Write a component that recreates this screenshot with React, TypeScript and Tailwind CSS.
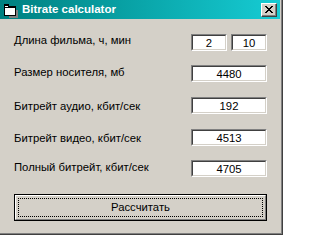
import * as React from "react";

type Row = {
  label: string;
  values: string[];
  rowClass: string;
  labelClass: string;
};

const ROWS: Row[] = [
  { label: "Длина фильма, ч, мин", values: ["2", "10"], rowClass: "mt-[15px]", labelClass: "mt-0" },
  { label: "Размер носителя, мб", values: ["4480"], rowClass: "mt-[14px]", labelClass: "mt-px" },
  { label: "Битрейт аудио, кбит/сек", values: ["192"], rowClass: "mt-[15px]", labelClass: "mt-[3px]" },
  { label: "Битрейт видео, кбит/сек", values: ["4513"], rowClass: "mt-[15px]", labelClass: "mt-[3px]" },
  { label: "Полный битрейт, кбит/сек", values: ["4705"], rowClass: "mt-[14px]", labelClass: "mt-px" },
];

function FormIcon() {
  return (
    <svg width="16" height="16" viewBox="0 0 16 16" shapeRendering="crispEdges" className="shrink-0">
      {/* shadow */}
      <rect x="7" y="8" width="9" height="8" fill="#808080" />
      {/* tab */}
      <rect x="2" y="2" width="5" height="2" fill="#000" />
      {/* window body */}
      <rect x="2" y="4" width="12" height="10" fill="#000" />
      <rect x="3" y="6" width="10" height="7" fill="#fff" />
      <rect x="3" y="4" width="3" height="1" fill="#fff" />
    </svg>
  );
}

function CloseGlyph() {
  const px: [number, number, number][] = [
    [0, 0, 2], [6, 0, 2],
    [1, 1, 2], [5, 1, 2],
    [2, 2, 4],
    [3, 3, 2],
    [2, 4, 4],
    [1, 5, 2], [5, 5, 2],
    [0, 6, 2], [6, 6, 2],
  ];
  return (
    <svg width="8" height="7" viewBox="0 0 8 7" shapeRendering="crispEdges">
      {px.map(([x, y, w], i) => (
        <rect key={i} x={x} y={y} width={w} height="1" fill="#000" />
      ))}
    </svg>
  );
}

function TitleBar() {
  return (
    <div className="flex h-[19px] shrink-0 items-center bg-gradient-to-r from-[#008080] to-[#16ccd4] pl-[2px] pr-[3px]">
      <FormIcon />
      <span className="ml-[4px] text-[11.5px] font-bold leading-none text-white">Bitrate calculator</span>
      <div className="ml-auto h-[14px] w-[16px] border-t border-l border-t-white border-l-white border-b border-r border-b-[#404040] border-r-[#404040] bg-[#d4d0c8]">
        <div className="flex h-full w-full items-center justify-center border-b border-r border-b-[#808080] border-r-[#808080]">
          <CloseGlyph />
        </div>
      </div>
    </div>
  );
}

function Field({ value, className }: { value: string; className: string }) {
  return (
    <div className={`h-[17px] border border-t-[#808080] border-l-[#808080] border-b-white border-r-white ${className}`}>
      <div className="h-full overflow-hidden border border-t-[#404040] border-l-[#404040] border-b-[#d4d0c8] border-r-[#d4d0c8] bg-white pt-px text-center leading-[13px]">
        {value}
      </div>
    </div>
  );
}

export default function App() {
  return (
    <div
      className="h-[235px] w-[283px] border-r border-b border-[#404040] bg-[#d4d0c8] text-[11.3px] text-black"
      style={{ fontFamily: '"Liberation Sans", Arial, sans-serif' }}
    >
      <div className="h-full border-r border-b border-[#808080] pr-px pb-px">
        <div className="flex h-full flex-col">
          <TitleBar />

          <div className="flex flex-col pl-[14px] pr-[13px]">
            {ROWS.map((row) => (
              <div key={row.label} className={`flex items-start justify-between ${row.rowClass}`}>
                <span className={`leading-[13px] ${row.labelClass}`}>{row.label}</span>
                {row.values.length === 2 ? (
                  <div className="flex w-[76px] gap-[4px]">
                    <Field value={row.values[0]} className="w-[36px]" />
                    <Field value={row.values[1]} className="w-[36px]" />
                  </div>
                ) : (
                  <Field value={row.values[0]} className="w-[76px]" />
                )}
              </div>
            ))}

            <button className="mt-[17px] h-[27px] w-[253px] border border-black bg-[#d4d0c8] p-0">
              <div className="h-full w-full border border-t-white border-l-white border-b-[#808080] border-r-[#808080] p-[2px]">
                <div className="flex h-full w-full items-center justify-center border border-dotted border-black leading-[13px]">
                  Рассчитать
                </div>
              </div>
            </button>
          </div>
        </div>
      </div>
    </div>
  );
}
